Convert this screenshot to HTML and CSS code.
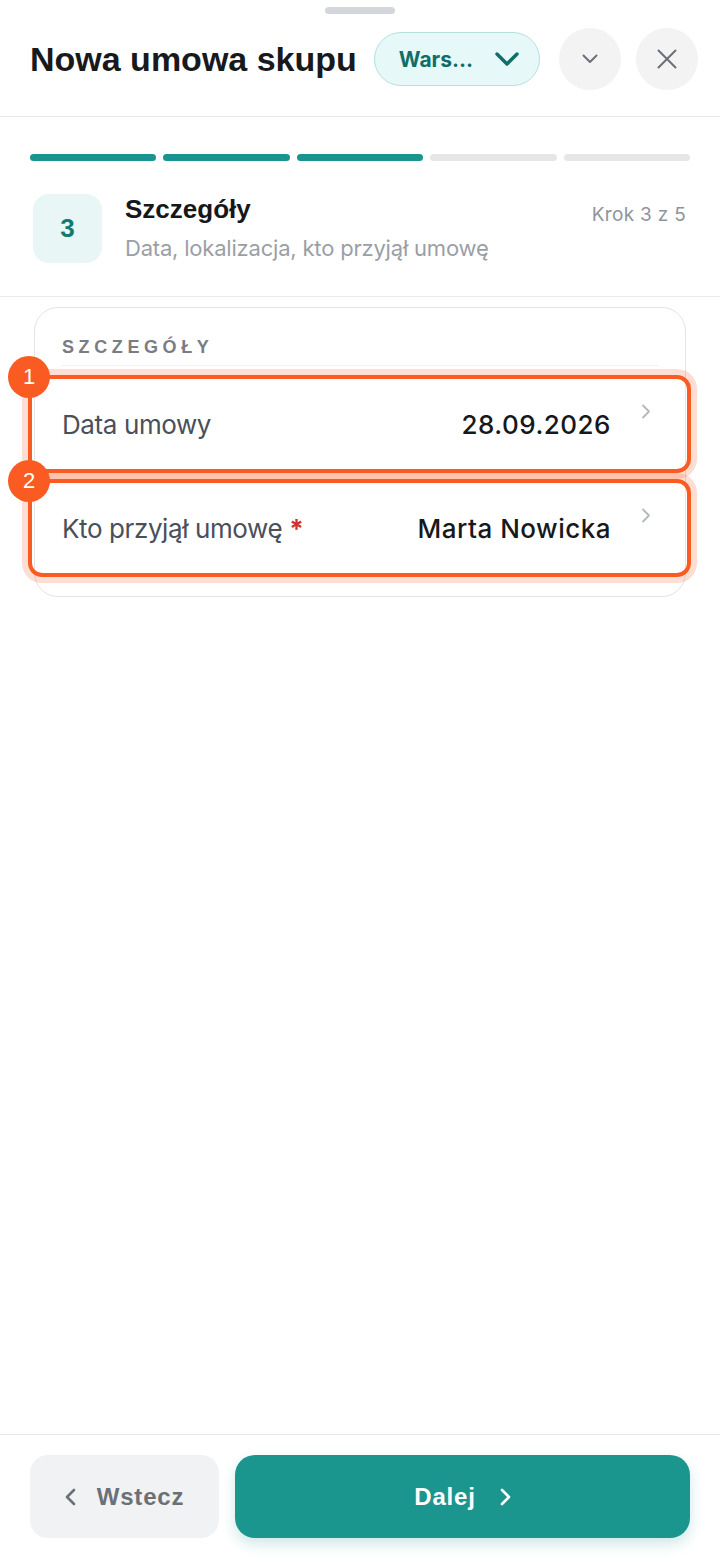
FILE: index.html
```html
<!DOCTYPE html>
<html lang="pl">
<head>
<meta charset="utf-8" />
<title>Nowa umowa skupu</title>
<link rel="stylesheet" href="styles.css">
</head>
<body>
	<div class="sheet">
		<div class="handle"></div>

		<div class="header">
			<h1 class="title">Nowa umowa skupu</h1>
			<div class="chip">
				<span class="chip-text">Wars…</span>
				<svg width="24" height="14" viewBox="0 0 24 14"><path d="M2 2l10 10 10-10" fill="none" stroke="#0f6e68" stroke-width="3.4" stroke-linecap="round" stroke-linejoin="round"/></svg>
			</div>
			<div class="round-btn first">
				<svg width="16" height="10" viewBox="0 0 16 10"><path d="M1.5 1.5l6.5 6.5 6.5-6.5" fill="none" stroke="#6b7078" stroke-width="2" stroke-linecap="round" stroke-linejoin="round"/></svg>
			</div>
			<div class="round-btn">
				<svg width="20" height="20" viewBox="0 0 20 20"><path d="M1.5 1.5l17 17M18.5 1.5l-17 17" fill="none" stroke="#6b7078" stroke-width="2" stroke-linecap="round"/></svg>
			</div>
		</div>

		<div class="progress">
			<div class="seg done"></div>
			<div class="seg done"></div>
			<div class="seg done"></div>
			<div class="seg"></div>
			<div class="seg"></div>
		</div>

		<div class="step">
			<div class="step-num">3</div>
			<div class="step-info">
				<div class="step-title">Szczegóły</div>
				<div class="step-sub">Data, lokalizacja, kto przyjął umowę</div>
			</div>
			<div class="step-count">Krok 3 z 5</div>
		</div>

		<div class="content">
			<div class="card">
				<div class="card-label">SZCZEGÓŁY</div>

				<div class="row marked">
					<span class="badge">1</span>
					<span class="row-label">Data umowy</span>
					<span class="row-value">28.09.2026</span>
					<svg class="row-arrow" width="10" height="15" viewBox="0 0 10 15"><path d="M2 1.5l6 6-6 6" fill="none" stroke="#b3b8bf" stroke-width="1.8" stroke-linecap="round" stroke-linejoin="round"/></svg>
				</div>

				<div class="row marked">
					<span class="badge">2</span>
					<span class="row-label">Kto przyjął umowę <b class="req">*</b></span>
					<span class="row-value">Marta Nowicka</span>
					<svg class="row-arrow" width="10" height="15" viewBox="0 0 10 15"><path d="M2 1.5l6 6-6 6" fill="none" stroke="#b3b8bf" stroke-width="1.8" stroke-linecap="round" stroke-linejoin="round"/></svg>
				</div>
			</div>
		</div>

		<div class="footer">
			<div class="btn back">
				<svg width="11" height="18" viewBox="0 0 11 18"><path d="M9 2L2 9l7 7" fill="none" stroke="#6b6f76" stroke-width="2.6" stroke-linecap="round" stroke-linejoin="round"/></svg>
				<span>Wstecz</span>
			</div>
			<div class="btn next">
				<span>Dalej</span>
				<svg width="11" height="18" viewBox="0 0 11 18"><path d="M2 2l7 7-7 7" fill="none" stroke="#fff" stroke-width="2.6" stroke-linecap="round" stroke-linejoin="round"/></svg>
			</div>
		</div>
	</div>
</body>
</html>
```

FILE: styles.css
```css
body, div, h1, span {padding:0; margin:0;}
body {background:#fff; font-family:"Liberation Sans", Arial, sans-serif; color:#15171a;}

.sheet {width:720px; height:1561px; display:flex; flex-direction:column; overflow:hidden;}
.handle {width:70px; height:7px; margin:7px auto 0; border-radius:4px; background:#d3d6dc;}

/* header */
.header {display:flex; align-items:center; padding:14px 22px 26px 30px; border-bottom:1px solid #e3e6ea;}
.title {font-size:34px; font-weight:bold; letter-spacing:0; color:#17191c; white-space:nowrap;}
.chip {margin-left:17px; width:166px; height:54px; border:1px solid #b6e0dd; border-radius:28px; background:#e7f8f8; display:flex; align-items:center; justify-content:space-between; padding:0 20px 0 24px; box-sizing:border-box;}
.chip-text {font-family:Inter, sans-serif; font-weight:700; font-size:21px; color:#0f6e68;}
.chip svg {display:block;}
.round-btn {width:62px; height:62px; border-radius:50%; background:#f3f3f4; display:flex; align-items:center; justify-content:center; margin-left:15px; flex-shrink:0;}
.round-btn.first {margin-left:19px;}

/* progress */
.progress {display:flex; gap:7px; padding:0 30px; margin-top:37px;}
.seg {flex:1; height:7px; border-radius:4px; background:#e5e6e8;}
.seg.done {background:#1a948e;}

/* step */
.step {display:flex; align-items:flex-start; padding:33px 34px 33px 33px; border-bottom:1px solid #e8eaed;}
.step-num {width:69px; height:69px; border-radius:16px; background:#e8f7f6; color:#137a72; font-size:26px; font-weight:bold; display:flex; align-items:center; justify-content:center; flex-shrink:0;}
.step-info {flex:1; margin-left:23px;}
.step-title {font-size:26px; font-weight:bold; line-height:30px; color:#15171a;}
.step-sub {font-family:Inter, sans-serif; font-size:22px; line-height:28px; margin-top:10px; letter-spacing:-0.2px; color:#9a9fa7;}
.step-count {font-family:Inter, sans-serif; font-size:19px; letter-spacing:0.3px; color:#8f949c; margin-top:9px;}

/* content */
.content {flex:1; padding:10px 34px 0;}
.card {border:1.5px solid #e1e4e8; border-radius:24px; padding:28px 0 16px;}
.card-label {margin:0 27px; padding-bottom:7px; border-bottom:1.5px solid #eef0f2; font-size:18px; font-weight:bold; letter-spacing:4.6px; color:#787d85; line-height:22px;}
.row {position:relative; height:104px; display:flex; align-items:center; padding:0 34px 0 27px;}
.card-label + .row {margin-top:6px;}
.row-label {flex:1; font-family:Inter, sans-serif; font-size:26px; color:#4a5059; letter-spacing:-0.4px;}
.req {color:#d0312d; font-weight:bold;}
.row-value {font-family:Inter, sans-serif; font-size:26px; font-weight:500; color:#16181b; letter-spacing:0.5px;}
.row-arrow {align-self:flex-start; margin-top:32px; margin-left:30px;}

/* annotation overlay */
.row.marked::after {content:""; position:absolute; top:3px; bottom:3px; left:-7px; right:-6px; border:4px solid #f95b22; border-radius:14px; box-shadow:0 0 0 6px rgba(249,91,34,0.2);}
.badge {position:absolute; left:-27px; top:-16px; width:42px; height:42px; border-radius:50%; background:#f95b22; color:#fff; font-size:22px; display:flex; align-items:center; justify-content:center; z-index:2;}

/* footer */
.footer {display:flex; gap:16px; padding:20px 30px 23px; border-top:1.5px solid #e3e6ea;}
.btn {height:83px; display:flex; align-items:center; justify-content:center; font-size:24px; font-weight:bold; letter-spacing:0.8px;}
.btn.back {width:189px; border-radius:18px; background:#f1f2f4; color:#6b6f76; gap:21px;}
.btn.next {flex:1; border-radius:20px; background:#1b968f; color:#fff; gap:24px; box-shadow:0 6px 14px rgba(27,150,143,0.22);}
```
